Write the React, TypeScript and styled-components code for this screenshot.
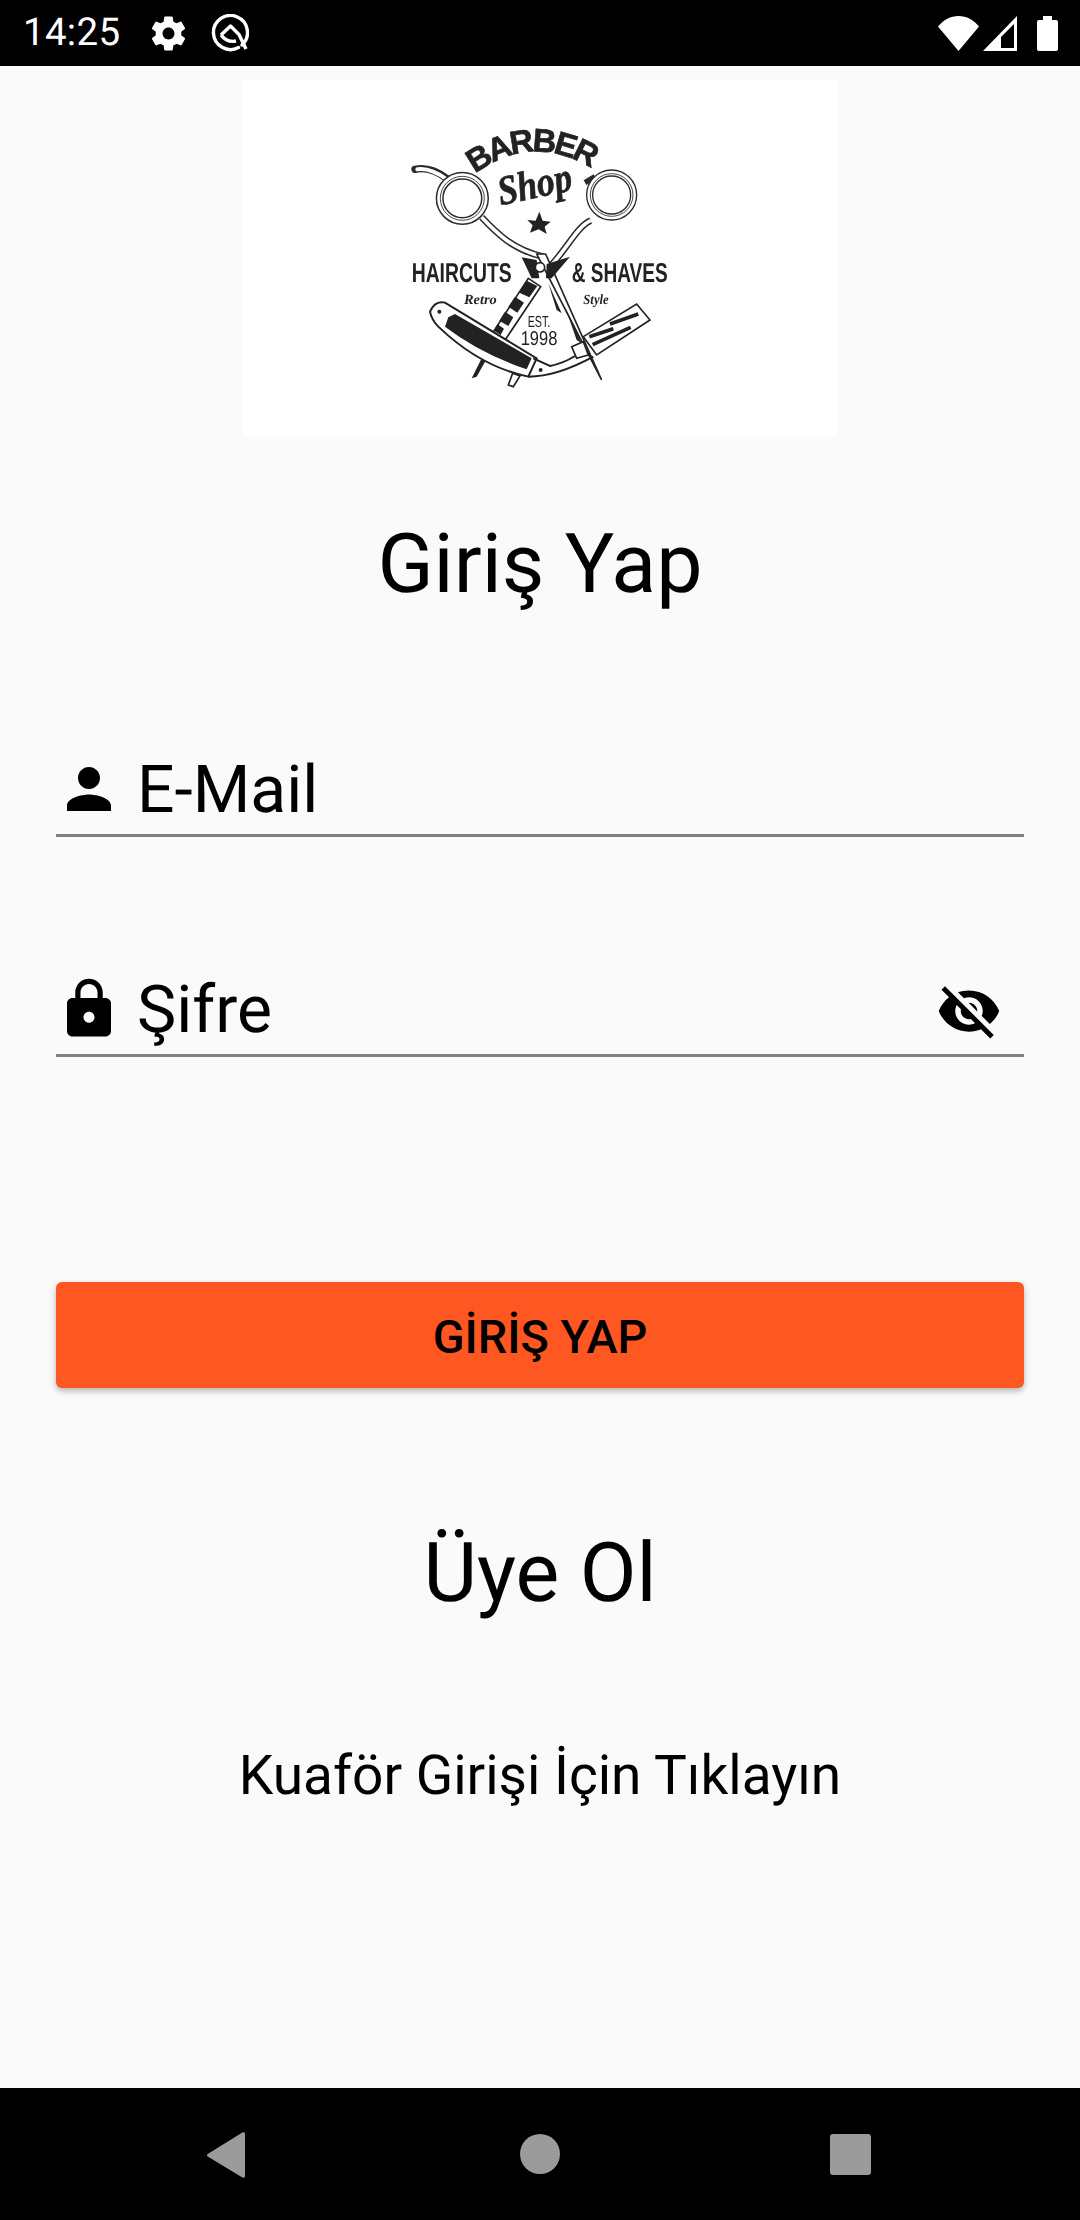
import React from "react";
import styled, { createGlobalStyle } from "styled-components";

const Global = createGlobalStyle`
  html, body { margin: 0; padding: 0; background: #fafafa; }
  body {
    font-family: Roboto, "Liberation Sans", sans-serif;
    color: #000;
    text-rendering: geometricPrecision;
  }
`;

const Screen = styled.div`
  width: 1080px;
  height: 2220px;
  display: flex;
  flex-direction: column;
  background: #fafafa;
  overflow: hidden;
`;

const StatusBar = styled.div`
  box-sizing: border-box;
  height: 66px;
  flex: none;
  background: #000;
  display: flex;
  align-items: center;
  padding: 0 22px 0 23px;
  color: #fff;
`;

const Clock = styled.span`
  font-size: 38.5px;
  line-height: 66px;
  letter-spacing: 0.3px;
  margin-right: 28px;
`;

const StatusGap = styled.div`
  flex: 1;
`;

const StatusIcon = styled.svg<{ $w: number; $h: number; $ml?: number }>`
  display: block;
  flex: none;
  width: ${(p) => p.$w}px;
  height: ${(p) => p.$h}px;
  margin-left: ${(p) => p.$ml ?? 0}px;
`;

const Main = styled.main`
  flex: 1;
  display: flex;
  flex-direction: column;
  align-items: center;
`;

const LogoCard = styled.div`
  width: 594px;
  height: 357px;
  margin-top: 14px;
  background: #fff;
`;

const LogoSvg = styled.svg`
  display: block;
  width: 594px;
  height: 357px;
`;

const Heading = styled.h1<{ $top: number }>`
  margin: ${(p) => p.$top}px 0 0;
  font-size: 82.5px;
  line-height: 100px;
  font-weight: 400;
  text-align: center;
`;

const Field = styled.div<{ $top: number }>`
  width: 968px;
  height: 90px;
  margin-top: ${(p) => p.$top}px;
  display: flex;
  align-items: center;
  border-bottom: 3px solid #7f7f7f;
`;

const FieldIcon = styled.svg`
  display: block;
  width: 66px;
  height: 66px;
  flex: none;
`;

const FieldLabel = styled.span`
  flex: 1;
  margin: 4px 0 0 15px;
  font-size: 66px;
  line-height: 86px;
`;

const FieldAction = styled.div`
  margin: 3px 22px 0 0;
  display: flex;
`;

const SubmitButton = styled.button`
  width: 968px;
  height: 106px;
  margin-top: 225px;
  border: 0;
  padding: 4px 0 0;
  border-radius: 6px;
  background: #ff5722;
  color: #000;
  font-family: Roboto, "Liberation Sans", sans-serif;
  font-size: 46.75px;
  font-weight: 500;
  box-shadow: 0 3px 6px rgba(0, 0, 0, 0.28);
`;

const LinkText = styled.div`
  margin-top: 112px;
  font-size: 55px;
  line-height: 80px;
  text-align: center;
`;

const NavBar = styled.nav`
  box-sizing: border-box;
  height: 132px;
  flex: none;
  background: #000;
  display: flex;
  align-items: flex-start;
  padding: 44px 0 0 207px;
`;

const NavBack = styled.svg`
  display: block;
  width: 38px;
  height: 46px;
  margin-right: 275px;
`;

const NavHome = styled.div`
  width: 40px;
  height: 40px;
  margin-top: 2px;
  border-radius: 50%;
  background: #9b9b9b;
  margin-right: 270px;
`;

const NavRecent = styled.div`
  width: 41px;
  height: 41px;
  margin-top: 2px;
  border-radius: 3px;
  background: #9b9b9b;
`;

const narrow = "'Liberation Sans Narrow','Liberation Sans',sans-serif";
const serif = "'Liberation Serif',serif";

const Logo = () => (
  <LogoSvg viewBox="0 0 594 357" aria-label="Barber Shop logo">
    <defs>
      <filter id="soft" x="-5%" y="-5%" width="110%" height="110%">
        <feGaussianBlur stdDeviation="0.5" />
      </filter>
      <path id="barberArc" d="M 285 192 Q 462 62 648 184" />
    </defs>
    <g transform="translate(137 30) scale(0.3333)" filter="url(#soft)" fill="#222" stroke="none">
      {/* finger rests */}
      <path d="M105 178 Q150 168 200 205" fill="none" stroke="#2a2a2a" strokeWidth="22" strokeLinecap="round" />
      <path d="M112 178 Q150 172 200 208" fill="none" stroke="#fff" strokeWidth="12" strokeLinecap="round" />
      <path d="M615 218 L645 200" fill="none" stroke="#2a2a2a" strokeWidth="16" />
      {/* scissor rings: stacked strokes leave the double lines */}
      <g fill="none">
        <circle cx="247" cy="265" r="68" stroke="#2a2a2a" strokeWidth="24" />
        <circle cx="247" cy="265" r="68" stroke="#fff" strokeWidth="15" />
        <circle cx="247" cy="265" r="66" stroke="#444" strokeWidth="3" />
        <circle cx="695" cy="255" r="66" stroke="#2a2a2a" strokeWidth="22" />
        <circle cx="695" cy="255" r="66" stroke="#fff" strokeWidth="14" />
        <circle cx="695" cy="255" r="64" stroke="#444" strokeWidth="3" />
        {/* arms */}
        <path d="M305 322 C350 370 400 420 490 440" stroke="#2a2a2a" strokeWidth="20" />
        <path d="M305 322 C350 370 400 420 490 440" stroke="#fff" strokeWidth="11" />
        <path d="M632 332 C590 350 560 420 505 475" stroke="#2a2a2a" strokeWidth="20" />
        <path d="M632 332 C590 350 560 420 505 475" stroke="#fff" strokeWidth="11" />
      </g>
      {/* long blade */}
      <path d="M470 432 L497 432 L664 808 Z" fill="#fff" stroke="#222" strokeWidth="5" strokeLinejoin="round" />
      <path d="M505 520 L545 610 L530 600 Z M555 590 L605 700 L590 690 Z" />
      {/* crossing */}
      <path d="M425 442 L470 450 L478 505 L455 505 Z" />
      <path d="M570 440 L515 505 L498 505 L500 462 Z" />
      <circle cx="480" cy="472" r="14" fill="#fff" stroke="#222" strokeWidth="5" />
      {/* striped blade */}
      <path d="M445 505 L482 530 L372 695 L336 672 Z" fill="#fff" stroke="#222" strokeWidth="5" />
      <path d="M440 512 L472 528 L448 562 L418 548 Z M405 560 L432 578 L412 608 L385 590 Z M375 605 L400 622 L385 648 L358 632 Z M352 642 L372 656 L362 675 L342 662 Z" />
      <path d="M305 745 L275 805 L290 800 L318 750 Z" />
      <path d="M398 790 L385 825 L400 830 L420 798 Z" fill="#fff" stroke="#222" strokeWidth="5" />
      {/* straight razor */}
      <path d="M150 605 Q165 570 195 578 L470 745 L445 800 Q300 770 175 650 Q155 630 150 605 Z" fill="#fff" stroke="#222" strokeWidth="6" />
      <path d="M205 622 L225 612 L455 745 L440 778 Q300 730 195 650 Z" />
      <circle cx="178" cy="605" r="6" />
      <path d="M460 745 L510 768 Q550 760 585 738 M445 800 Q530 800 640 740" fill="none" stroke="#222" strokeWidth="6" />
      <circle cx="482" cy="780" r="6" />
      <path d="M610 680 L770 582 L810 630 L650 735 Z" fill="#fff" stroke="#222" strokeWidth="5" />
      <path d="M628 680 L700 656 M638 704 L752 652 M690 642 L775 612" fill="none" stroke="#222" strokeWidth="11" />
      <path d="M575 710 L610 695 L625 735 L590 745 Z" fill="#fff" stroke="#222" strokeWidth="5" />
      {/* star */}
      <path d="M478 305 L488 332 L512 335 L494 350 L500 372 L476 358 L450 368 L458 346 L442 330 L467 332 Z" />
      {/* lettering */}
      <text fontFamily={narrow} fontWeight="700" fontSize="98" stroke="#222" strokeWidth="2" textLength="375">
        <textPath href="#barberArc" startOffset="0">BARBER</textPath>
      </text>
      <text x="362" y="286" transform="rotate(-12 362 286)" fontFamily={serif} fontStyle="italic" fontWeight="700" fontSize="124" stroke="#222" strokeWidth="2" textLength="225" lengthAdjust="spacingAndGlyphs">Shop</text>
      <text x="95" y="515" fontFamily={narrow} fontWeight="700" fontSize="82" textLength="300" lengthAdjust="spacingAndGlyphs">HAIRCUTS</text>
      <text x="575" y="515" fontFamily={narrow} fontWeight="700" fontSize="82" textLength="288" lengthAdjust="spacingAndGlyphs">&amp; SHAVES</text>
      <text x="252" y="583" fontFamily={serif} fontStyle="italic" fontWeight="700" fontSize="42" textLength="98" lengthAdjust="spacingAndGlyphs">Retro</text>
      <text x="610" y="583" fontFamily={serif} fontStyle="italic" fontWeight="700" fontSize="42" textLength="76" lengthAdjust="spacingAndGlyphs">Style</text>
      <text x="443" y="650" fontFamily={narrow} fontSize="48" textLength="68" lengthAdjust="spacingAndGlyphs">EST.</text>
      <text x="422" y="706" fontFamily={narrow} fontSize="60" textLength="110" lengthAdjust="spacingAndGlyphs">1998</text>
    </g>
  </LogoSvg>
);

export default function App() {
  return (
    <Screen>
      <Global />
      <StatusBar>
        <Clock>14:25</Clock>
        <StatusIcon $w={41} $h={41} viewBox="0 0 24 24" fill="#fff">
          <path d="M19.43 12.98c.04-.32.07-.64.07-.98s-.03-.66-.07-.98l2.11-1.65c.19-.15.24-.42.12-.64l-2-3.46c-.12-.22-.39-.3-.61-.22l-2.49 1c-.52-.4-1.08-.73-1.69-.98l-.38-2.65C14.46 2.18 14.25 2 14 2h-4c-.25 0-.46.18-.49.42l-.38 2.65c-.61.25-1.17.59-1.69.98l-2.49-1c-.23-.09-.49 0-.61.22l-2 3.46c-.13.22-.07.49.12.64l2.11 1.65c-.04.32-.07.65-.07.98s.03.66.07.98l-2.11 1.65c-.19.15-.24.42-.12.64l2 3.46c.12.22.39.3.61.22l2.49-1c.52.4 1.08.73 1.69.98l.38 2.65c.03.24.24.42.49.42h4c.25 0 .46-.18.49-.42l.38-2.65c.61-.25 1.17-.59 1.69-.98l2.49 1c.23.09.49 0 .61-.22l2-3.46c.12-.22.07-.49-.12-.64l-2.11-1.65zM12 15.5c-1.93 0-3.5-1.57-3.5-3.5s1.57-3.5 3.5-3.5 3.5 1.57 3.5 3.5-1.57 3.5-3.5 3.5z" />
        </StatusIcon>
        <StatusIcon $w={38} $h={38} $ml={22} viewBox="0 0 38 38" fill="none" stroke="#fff" strokeWidth="3.4">
          <path d="M27.5 33.5 A17 17 0 1 1 31 31" strokeLinecap="round" />
          <path d="M10 21 L19.5 12 L28 20.5 L35 35" strokeLinejoin="round" />
          <path d="M10 21 Q16 29 25 27" />
        </StatusIcon>
        <StatusGap />
        <StatusIcon $w={41} $h={35} viewBox="0 0 41 35" fill="#fff">
          <path d="M20.5 35 L0 10.5 C5.5 4 12.5 0 20.5 0 C28.5 0 35.5 4 41 10.5 Z" />
        </StatusIcon>
        <StatusIcon $w={34} $h={35} $ml={4} viewBox="0 0 34 35" fill="#fff">
          <path fillRule="evenodd" d="M34 0 V35 H0 Z M31 8 L18 21 V32 H31 Z" />
        </StatusIcon>
        <StatusIcon $w={21} $h={35} $ml={20} viewBox="0 0 21 35" fill="#fff">
          <path d="M6 0 H15 V4 H19 C20.2 4 21 4.8 21 6 V33 C21 34.2 20.2 35 19 35 H2 C.8 35 0 34.2 0 33 V6 C0 4.8 .8 4 2 4 H6 Z" />
        </StatusIcon>
      </StatusBar>

      <Main>
        <LogoCard>
          <Logo />
        </LogoCard>
        <Heading $top={78}>Giriş Yap</Heading>
        <Field $top={129}>
          <FieldIcon viewBox="0 0 24 24">
            <path d="M12 12c2.21 0 4-1.79 4-4s-1.79-4-4-4-4 1.79-4 4 1.79 4 4 4zm0 2c-2.67 0-8 1.34-8 4v2h16v-2c0-2.66-5.33-4-8-4z" />
          </FieldIcon>
          <FieldLabel>E-Mail</FieldLabel>
        </Field>
        <Field $top={127}>
          <FieldIcon viewBox="0 0 24 24">
            <path d="M18 8h-1V6c0-2.76-2.24-5-5-5S7 3.24 7 6v2H6c-1.1 0-2 .9-2 2v10c0 1.1.9 2 2 2h12c1.1 0 2-.9 2-2V10c0-1.1-.9-2-2-2zm-6 9c-1.1 0-2-.9-2-2s.9-2 2-2 2 .9 2 2-.9 2-2 2zm3.1-9H8.9V6c0-1.71 1.39-3.1 3.1-3.1 1.71 0 3.1 1.39 3.1 3.1v2z" />
          </FieldIcon>
          <FieldLabel>Şifre</FieldLabel>
          <FieldAction>
            <FieldIcon viewBox="0 0 24 24">
              <path d="M12 7c2.76 0 5 2.24 5 5 0 .65-.13 1.26-.36 1.83l2.92 2.92c1.51-1.26 2.7-2.89 3.43-4.75-1.73-4.39-6-7.5-11-7.5-1.4 0-2.74.25-3.98.7l2.16 2.16C10.74 7.13 11.35 7 12 7zM2 4.27l2.28 2.28.46.46C3.08 8.3 1.78 10.02 1 12c1.73 4.39 6 7.5 11 7.5 1.55 0 3.03-.3 4.38-.84l.42.42L19.73 22 21 20.73 3.27 3 2 4.27zM7.53 9.8l1.55 1.55c-.05.21-.08.43-.08.65 0 1.66 1.34 3 3 3 .22 0 .44-.03.65-.08l1.55 1.55c-.67.33-1.41.53-2.2.53-2.76 0-5-2.24-5-5 0-.79.2-1.53.53-2.2zm4.31-.78l3.15 3.15.02-.16c0-1.66-1.34-3-3-3l-.17.01z" />
            </FieldIcon>
          </FieldAction>
        </Field>
        <SubmitButton>GİRİŞ YAP</SubmitButton>
        <Heading $top={136}>Üye Ol</Heading>
        <LinkText>Kuaför Girişi İçin Tıklayın</LinkText>
      </Main>

      <NavBar>
        <NavBack viewBox="0 0 38 46" fill="#9b9b9b">
          <path d="M35 .8 C37 -.4 38 .8 38 2 V44 C38 45.2 37 46.4 35 45.2 L1.5 25 C-.5 24 -.5 22.5 1.5 21.5 Z" />
        </NavBack>
        <NavHome />
        <NavRecent />
      </NavBar>
    </Screen>
  );
}
